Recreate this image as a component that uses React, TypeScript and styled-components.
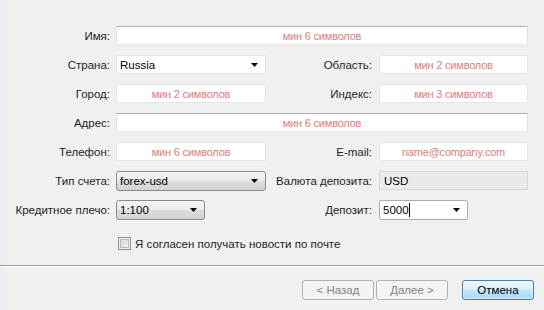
import React from "react";
import styled, { createGlobalStyle, css } from "styled-components";

const GlobalStyle = createGlobalStyle`
  html, body {
    margin: 0;
    padding: 0;
    background: #f0f0f0;
  }
  body {
    font-family: "Liberation Sans", Arial, sans-serif;
    font-size: 11px;
    color: #1e1e1e;
  }
`;

const Window = styled.div`
  width: 544px;
  height: 310px;
  background: #f0f0f0;
  display: flex;
  flex-direction: column;
  box-shadow: inset 2px 0 0 #e9eef5;
`;

const Form = styled.div`
  display: grid;
  grid-template-columns: 116px 150px 113px 149px;
  grid-template-rows: repeat(7, 19px) 21px;
  row-gap: 10px;
  padding-top: 26px;
  align-items: center;
`;

const Label = styled.label<{ $right?: boolean }>`
  text-align: right;
  padding-right: ${(p) => (p.$right ? 7 : 6)}px;
  white-space: nowrap;
  font-size: 11.5px;
`;

const TextBox = styled.input<{ $wide?: boolean }>`
  grid-column: ${(p) => (p.$wide ? "2 / 5" : "auto")};
  height: 19px;
  box-sizing: border-box;
  margin: 0;
  padding: 0 3px;
  border: 1px solid;
  border-color: ${(p) =>
    p.$wide ? "#abadb3 #dbdfe6 #e3e9ef #e2e3ea" : "#e3e6ea"};
  background: #fff;
  font: inherit;
  text-align: center;
  outline: none;

  &::placeholder {
    color: #dd7c7c;
    opacity: 1;
    letter-spacing: -0.2px;
  }
`;

type Look = "flat" | "button" | "edit";

const looks = {
  flat: css`
    border: 1px solid #e3e6ea;
    background: #fff;
  `,
  button: css`
    border: 1px solid #8a8a8a;
    border-radius: 3px;
    background: linear-gradient(#f4f4f4, #ebebeb 50%, #dddddd 51%, #d2d2d2);
  `,
  edit: css`
    border: 1px solid #abadb3;
    border-radius: 2px;
    background: #fff;
  `,
};

const Combo = styled.div<{ $look: Look; $w?: number }>`
  display: flex;
  align-items: center;
  justify-content: space-between;
  height: ${(p) => (p.$look === "flat" ? 19 : 20)}px;
  width: ${(p) => (p.$w ? `${p.$w}px` : "auto")};
  box-sizing: border-box;
  padding: 0 7px 0 3px;
  color: #000;
  font-size: 11.5px;
  ${(p) => looks[p.$look]}
`;

const Value = styled.span`
  display: flex;
  align-items: center;
`;

const Caret = styled.span`
  width: 1px;
  height: 14px;
  background: #000;
`;

const Arrow = () => (
  <svg width="7" height="4" viewBox="0 0 7 4">
    <polygon points="0,0 7,0 3.5,4" fill="#000" />
  </svg>
);

const ReadOnlyBox = styled.div`
  height: 19px;
  box-sizing: border-box;
  display: flex;
  align-items: center;
  padding-left: 4px;
  border: 1px solid #d6d6d6;
  background: #eaeaea;
  color: #000;
  font-size: 11.5px;
`;

const CheckRow = styled.label`
  grid-column: 2 / 5;
  align-self: end;
  display: flex;
  align-items: center;
  gap: 4px;
  padding-left: 2px;
  height: 13px;
  white-space: nowrap;
  font-size: 11.5px;
`;

const CheckBox = styled.span`
  width: 13px;
  height: 13px;
  box-sizing: border-box;
  border: 1px solid #8e8f8f;
  background: linear-gradient(135deg, #cfd2d6, #f6f6f6);
  box-shadow: inset 0 0 0 1px #f4f4f4, inset 0 0 0 2px #b7bbc0;
`;

const Separator = styled.div`
  margin-top: 15px;
  border-top: 1px solid #a0a0a0;
  border-bottom: 1px solid #fcfcfc;
`;

const Footer = styled.div`
  display: flex;
  justify-content: flex-end;
  gap: 14px;
  padding: 13px 10px 0 0;
`;

const NavGroup = styled.div`
  display: flex;
  gap: 2px;
`;

const Button = styled.button<{ $primary?: boolean }>`
  width: 72px;
  height: 20px;
  padding: 0;
  font: inherit;
  font-size: 11.5px;
  border-radius: 3px;
  ${(p) =>
    p.$primary
      ? css`
          border: 1px solid #3c7fb1;
          color: #000;
          background: linear-gradient(#eaf6fd, #d9f0fc 50%, #bee6fd 51%, #a7d9f5);
          box-shadow: inset 0 0 0 1px rgba(255, 255, 255, 0.55);
        `
      : css`
          border: 1px solid #adb2b5;
          color: #838383;
          background: #f4f4f4;
        `}
`;

export default function App() {
  return (
    <Window>
      <GlobalStyle />
      <Form>
        <Label>Имя:</Label>
        <TextBox $wide placeholder="мин 6 символов" />

        <Label>Страна:</Label>
        <Combo $look="flat">
          <Value>Russia</Value>
          <Arrow />
        </Combo>
        <Label $right>Область:</Label>
        <TextBox placeholder="мин 2 символов" />

        <Label>Город:</Label>
        <TextBox placeholder="мин 2 символов" />
        <Label $right>Индекс:</Label>
        <TextBox placeholder="мин 3 символов" />

        <Label>Адрес:</Label>
        <TextBox $wide placeholder="мин 6 символов" />

        <Label>Телефон:</Label>
        <TextBox placeholder="мин 6 символов" />
        <Label $right>E-mail:</Label>
        <TextBox placeholder="name@company.com" />

        <Label>Тип счета:</Label>
        <Combo $look="button">
          <Value>forex-usd</Value>
          <Arrow />
        </Combo>
        <Label $right>Валюта депозита:</Label>
        <ReadOnlyBox>USD</ReadOnlyBox>

        <Label>Кредитное плечо:</Label>
        <Combo $look="button" $w={89}>
          <Value>1:100</Value>
          <Arrow />
        </Combo>
        <Label $right>Депозит:</Label>
        <Combo $look="edit" $w={89}>
          <Value>
            5000
            <Caret />
          </Value>
          <Arrow />
        </Combo>

        <CheckRow>
          <CheckBox />
          Я согласен получать новости по почте
        </CheckRow>
      </Form>

      <Separator />

      <Footer>
        <NavGroup>
          <Button disabled>&lt; Назад</Button>
          <Button disabled>Далее &gt;</Button>
        </NavGroup>
        <Button $primary>Отмена</Button>
      </Footer>
    </Window>
  );
}
